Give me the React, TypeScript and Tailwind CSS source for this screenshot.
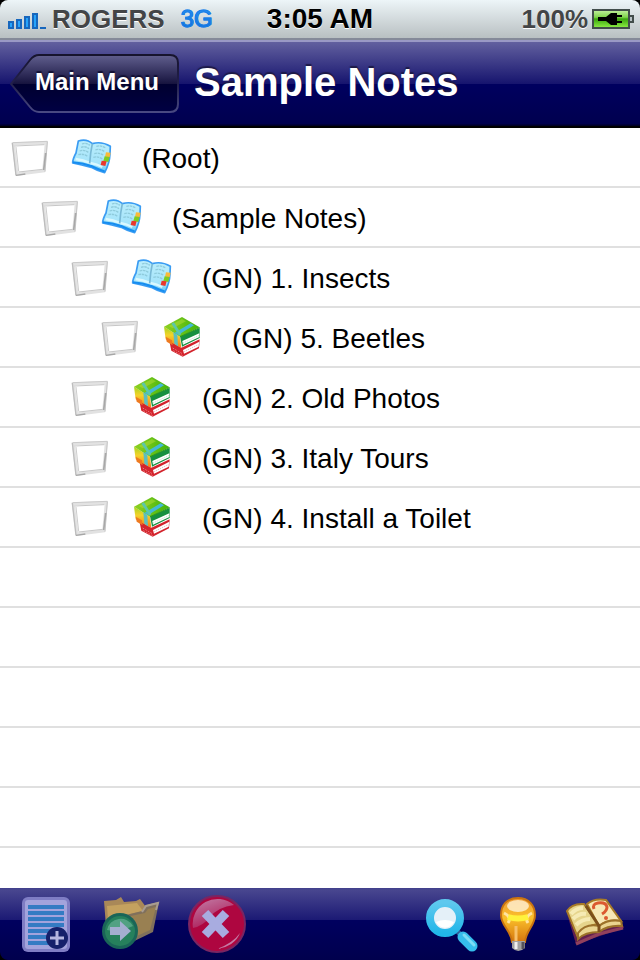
import React, { useState } from 'react';

interface NoteRow {
  id: string;
  label: string;
  level: number;
  kind: 'notebook' | 'books';
}

const notes: NoteRow[] = [
  { id: 'root', label: '(Root)', level: 0, kind: 'notebook' },
  { id: 'sample', label: '(Sample Notes)', level: 1, kind: 'notebook' },
  { id: 'insects', label: '(GN) 1. Insects', level: 2, kind: 'notebook' },
  { id: 'beetles', label: '(GN) 5. Beetles', level: 3, kind: 'books' },
  { id: 'photos', label: '(GN) 2. Old Photos', level: 2, kind: 'books' },
  { id: 'italy', label: '(GN) 3. Italy Tours', level: 2, kind: 'books' },
  { id: 'toilet', label: '(GN) 4. Install a Toilet', level: 2, kind: 'books' },
];

const indents = ['pl-[10px]', 'pl-[40px]', 'pl-[70px]', 'pl-[100px]'];

const CheckFrame = ({ checked }: { checked: boolean }) => (
  <svg viewBox="0 0 120 120" className="h-10 w-10 shrink-0" aria-hidden="true">
    <path d="M10 20 L109 17 L101 102 L21 112 Z" fill="#fff" stroke="#e2e2e2" strokeWidth="9" />
    <path d="M8 17 L112 13" stroke="#cacaca" strokeWidth="3" />
    <path d="M14 27 L103 23" stroke="#c6c6c6" strokeWidth="3" />
    <path d="M7 18 L18 115" stroke="#bdbdbd" strokeWidth="4" />
    <path d="M18 30 L26 103" stroke="#cdcdcd" strokeWidth="3" />
    <path d="M112 14 L105 104" stroke="#c4c4c4" strokeWidth="3" />
    <path d="M107 48 L101 99" stroke="#a8a8a8" strokeWidth="5" />
    <path d="M18 115 L46 111" stroke="#a6a6a6" strokeWidth="4" />
    <path d="M26 105 L98 97" stroke="#c6c6c6" strokeWidth="3" />
    {checked && <path d="M36 62 L54 84 L88 38" fill="none" stroke="#3a7d2c" strokeWidth="10" />}
  </svg>
);

const NotebookIcon = () => (
  <svg viewBox="0 0 132 120" className="h-10 w-11 shrink-0" aria-hidden="true">
    <defs>
      <linearGradient id="page" x1="0" y1="0" x2="0" y2="1">
        <stop offset="0" stopColor="#bdeefb" />
        <stop offset="0.7" stopColor="#a4e4fb" />
        <stop offset="1" stopColor="#63c3f5" />
      </linearGradient>
    </defs>
    <path
      d="M25 12 Q50 4 67 20 Q95 12 121 28 L120 50 Q119 78 104 107 Q80 101 64 91 Q34 83 8 78 Q8 66 18 48 Z"
      fill="url(#page)"
      stroke="#3a9cf3"
      strokeWidth="5"
      strokeLinejoin="round"
    />
    <path d="M9 76 Q38 78 64 87 Q82 96 104 103" fill="none" stroke="#168df0" strokeWidth="6" />
    <path d="M17 66 Q40 69 61 78 Q82 82 97 90" fill="none" stroke="#d9f8ff" strokeWidth="7" />
    <path d="M67 20 Q61 48 59 79" fill="none" stroke="#79b9d6" strokeWidth="5" />
    <path
      d="M36 21 Q48 16 60 25 M33 31 Q45 26 57 35 M29 42 Q42 37 55 46 M25 53 Q39 49 53 58 M79 28 Q93 24 108 33 M76 39 Q89 34 104 44 M73 50 Q86 45 101 55 M70 61 Q83 57 97 66"
      fill="none"
      stroke="#8fcbdc"
      strokeWidth="4"
      strokeDasharray="8 2"
    />
    <path d="M108 46 L122 47 L119 61 L105 59 Z" fill="#f9b93a" />
    <path d="M104 58 L119 60 L115 75 L100 72 Z" fill="#7dcc25" />
    <path d="M95 71 L110 73 L106 87 L92 84 Z" fill="#e9372f" />
  </svg>
);

const BooksIcon = () => (
  <svg viewBox="0 0 132 126" className="h-[42px] w-11 shrink-0" aria-hidden="true">
    <defs>
      <linearGradient id="cover" x1="0" y1="0" x2="0" y2="1">
        <stop offset="0" stopColor="#a3d420" />
        <stop offset="0.4" stopColor="#f4d32a" />
        <stop offset="1" stopColor="#f07a1c" />
      </linearGradient>
      <linearGradient id="lid" x1="0" y1="0" x2="1" y2="0">
        <stop offset="0" stopColor="#8ed022" />
        <stop offset="1" stopColor="#41b30c" />
      </linearGradient>
    </defs>
    {/* lower red book */}
    <path d="M28 74 L64 95 L119 70 L117 97 L68 122 L34 104 Z" fill="#d3232c" />
    <path d="M69 102 L118 77 L116 92 L72 113 Z" fill="#fff" />
    <path d="M71 108 L116 85" stroke="#dca0a0" strokeWidth="2" strokeDasharray="4 3" />
    <path d="M38 96 L67 113 M40 104 L68 119" stroke="#f3a4a4" strokeWidth="2" strokeDasharray="5 4" />
    {/* upper green book */}
    <path d="M12 32 L60 62 L64 96 L17 70 Z" fill="url(#cover)" />
    <path d="M17 62 L36 73 L38 88 L20 77 Z" fill="#ee7a20" />
    <path d="M60 60 L119 36 L119 66 L66 92 Z" fill="#16903f" />
    <path d="M67 75 L118 52 L118 63 L69 86 Z" fill="#fff" />
    <path d="M69 81 L118 58" stroke="#a9cfb4" strokeWidth="2" strokeDasharray="4 3" />
    <path d="M12 32 L66 3 L119 34 L60 62 Z" fill="url(#lid)" />
    <path d="M26 30 L66 9 L78 16 L38 37 Z" fill="#b4de3a" opacity="0.5" />
    <path d="M60 62 L119 35" stroke="#2d9a1c" strokeWidth="3" />
    {/* ribbon */}
    <path d="M44 50 L92 22 L102 28 L54 57 Z" fill="#43b9d6" />
    <path d="M34 23 L42 19 L64 54 L58 59 Z" fill="#5cc7a8" />
    <path d="M40 48 L52 57 L54 91 L43 83 Z" fill="#5cbfc0" />
  </svg>
);

const NewNoteIcon = () => (
  <svg viewBox="0 0 60 60" className="h-[60px] w-[60px]" aria-hidden="true">
    <rect x="6" y="3" width="48" height="55" rx="6" fill="#7f7dc4" />
    <rect x="9" y="6" width="42" height="49" rx="3" fill="#a3a3dc" />
    <path
      d="M12 13H48 M12 19H48 M12 25H48 M12 31H48 M12 37H48 M12 43H40 M12 49H36"
      stroke="#347bc3"
      strokeWidth="4"
    />
    <circle cx="41" cy="44" r="11" fill="#15206b" />
    <path d="M41 37V51 M34 44H48" stroke="#b4b5e0" strokeWidth="3" />
  </svg>
);

const MoveFolderIcon = () => (
  <svg viewBox="2 0 60 60" className="h-[60px] w-[60px]" aria-hidden="true">
    <path d="M4 7 L16 6 L21 3 L24 8 L36 7 L40 5 L46 13 L43 35 L24 50 L7 45 Z" fill="#a98858" />
    <path d="M7 12 L37 9 L43 17 L17 23 L9 40 Z" fill="#c4a15f" />
    <path d="M18 23 L42 17 L46 11 L59 8 L57 18 L53 38 L26 51 Z" fill="#80705c" />
    <path d="M21 24 L45 19 L48 15 L56 13 L50 36 L26 47 Z" fill="#998052" />
    <path d="M42 18 L46 12 L58 9 L56 16" fill="none" stroke="#a89c90" strokeWidth="2" />
    <circle cx="20" cy="37" r="18" fill="#1a6558" />
    <circle cx="20" cy="37" r="15" fill="#26805c" />
    <path d="M7 36 A14 14 0 0 1 33 32 Q20 38 7 36" fill="#52a183" />
    <path d="M10 33H20V27L31 37L20 47V41H10Z" fill="#a4aed0" />
  </svg>
);

const DeleteIcon = () => (
  <svg viewBox="0 0 60 60" className="h-[60px] w-[60px]" aria-hidden="true">
    <defs>
      <linearGradient id="gloss" x1="0" y1="0" x2="0.5" y2="1">
        <stop offset="0" stopColor="#c27fa8" />
        <stop offset="1" stopColor="#ad1a56" />
      </linearGradient>
    </defs>
    <circle cx="29" cy="30" r="28" fill="#ae0640" stroke="#7a2562" strokeWidth="2" />
    <path d="M5 34 A25 25 0 0 1 46 11 Q30 13 22 23 Q15 32 5 34Z" fill="url(#gloss)" />
    <path d="M29 55 Q47 52 52 39 Q45 49 29 55Z" fill="#c57aa4" />
    <path d="M17 19 L38 41 M38 19 L17 41" stroke="#a8ace0" strokeWidth="9" />
  </svg>
);

const SearchIcon = () => (
  <svg viewBox="0 0 56 60" className="h-[60px] w-14" aria-hidden="true">
    <defs>
      <linearGradient id="lens" x1="0" y1="0" x2="0" y2="1">
        <stop offset="0" stopColor="#5ec8ee" />
        <stop offset="1" stopColor="#21b6e9" />
      </linearGradient>
    </defs>
    <path d="M31 35 L37 41" stroke="#315b99" strokeWidth="5" />
    <circle cx="21" cy="24" r="15" fill="#e4f0f8" stroke="url(#lens)" strokeWidth="8" />
    <path d="M12 28 A10 10 0 0 0 30 28 Q21 24 12 28" fill="#fff" />
    <path d="M39 43 L48 52" stroke="#35bdec" strokeWidth="11" strokeLinecap="round" />
    <path d="M40 41 L50 51" stroke="#7cdcf5" strokeWidth="3" strokeLinecap="round" />
  </svg>
);

const BulbIcon = () => (
  <svg viewBox="0 0 48 60" className="h-[60px] w-12" aria-hidden="true">
    <defs>
      <linearGradient id="bulb" x1="0" y1="0" x2="0" y2="1">
        <stop offset="0" stopColor="#ee9a38" />
        <stop offset="0.45" stopColor="#fbc02a" />
        <stop offset="1" stopColor="#d4750f" />
      </linearGradient>
    </defs>
    <path
      d="M20 4 C8 4 3 12 3 21 C3 32 13 36 14 48 H27 C28 36 37 32 37 21 C37 12 31 4 20 4Z"
      fill="url(#bulb)"
      stroke="#ca740f"
      strokeWidth="2"
    />
    <ellipse cx="20" cy="12" rx="11" ry="6" fill="#fff2d4" opacity="0.8" />
    <path d="M6 19 Q14 23 10 29 M34 19 Q26 23 30 29" fill="none" stroke="#ffe4a1" strokeWidth="3" />
    <path d="M10 23 Q20 26 30 23" fill="none" stroke="#fff23c" strokeWidth="6" />
    <path d="M18 32V47" stroke="#f7c06a" strokeWidth="3" />
    <path d="M14 47H27V54Q20 60 14 54Z" fill="#a1a0a1" />
    <path d="M18 48V55" stroke="#efefef" strokeWidth="3" />
    <path d="M25 48V55" stroke="#54525b" strokeWidth="3" />
  </svg>
);

const HelpBookIcon = () => (
  <svg viewBox="0 0 60 60" className="h-[60px] w-[60px]" aria-hidden="true">
    <path d="M3 20 L12 50 L60 34 L58 29 L35 32 L13 44 Z" fill="#64204f" />
    <path d="M12 50 L35 40 L59 34" fill="none" stroke="#91405d" strokeWidth="3" />
    <path d="M3 17 Q8 9 20 10 L34 30 Q22 31 14 44 Z" fill="#e6d58c" stroke="#a87b27" strokeWidth="2" />
    <path d="M23 10 Q30 4 42 6 L57 27 Q44 24 35 32 Z" fill="#f7e8b5" stroke="#a87b27" strokeWidth="2" />
    <path
      d="M14 39 Q22 29 35 32 Q44 25 57 27 L58 32 Q44 31 35 38 Q21 38 14 45Z"
      fill="#ead590"
      stroke="#9c722a"
      strokeWidth="2"
    />
    <path d="M7 20 Q12 14 19 14 M9 25 Q15 19 22 20 M12 31 Q18 25 26 25" fill="none" stroke="#f6ebb4" strokeWidth="4" />
    <path d="M22 12 L35 32 V38" fill="none" stroke="#7c501b" strokeWidth="3" />
    <path d="M30 15 Q28 10 34 9 Q42 8 43 13 Q43 17 38 20" fill="none" stroke="#db5930" strokeWidth="3" />
    <circle cx="42" cy="24" r="2" fill="#db5930" />
  </svg>
);

const StatusBar = () => (
  <div className="bg-black">
    <div className="grid h-10 grid-cols-[1fr_auto_1fr] items-center rounded-t-lg border-b-2 border-[#858a99] bg-linear-to-b from-[#edf5f8] to-[#b9c0c2] px-2 font-bold">
      <div className="flex items-center">
        <svg viewBox="0 0 38 18" className="mt-0.5 h-[18px] w-[38px]" aria-hidden="true">
          <path
            d="M1 11h4v6h-4z M9 9h4v8h-4z M17 6h4v11h-4z M25 3h4v14h-4z"
            fill="#26a4fb"
            stroke="#1767bd"
            strokeWidth="2"
          />
          <path d="M32 17h6" stroke="#1767bd" strokeWidth="2" />
        </svg>
        <span className="ml-1.5 text-[26px] leading-9 text-[#434547] [text-shadow:0_1px_0_#fff]">ROGERS</span>
        <span className="ml-4 bg-linear-to-b from-[#32a2ff] to-[#075ac7] bg-clip-text text-2xl font-normal leading-9 text-transparent [-webkit-text-stroke:1px_#187ee8]">
          3G
        </span>
      </div>
      <span className="text-[28px] leading-9 text-black [text-shadow:0_1px_0_#fff]">3:05 AM</span>
      <div className="flex items-center justify-end">
        <span className="text-[26px] leading-9 text-[#434547] [text-shadow:0_1px_0_#fff]">100%</span>
        <svg viewBox="0 0 42 20" className="-mr-0.5 ml-1 h-5 w-[42px]" aria-hidden="true">
          <defs>
            <linearGradient id="charge" x1="0" y1="0" x2="0" y2="1">
              <stop offset="0" stopColor="#c4f1a1" />
              <stop offset="0.4" stopColor="#80d44c" />
              <stop offset="0.5" stopColor="#39a50d" />
              <stop offset="1" stopColor="#91f147" />
            </linearGradient>
          </defs>
          <rect x="1" y="1" width="36" height="18" fill="url(#charge)" stroke="#424d4b" strokeWidth="2" />
          <path d="M38 7h3v6h-3" fill="#b7c1c4" stroke="#424d4b" strokeWidth="2" />
          <path d="M6 8h8l5-4h6v2h5v2h-5v4h5v2h-5v2h-6l-5-4h-8z" fill="#000" />
        </svg>
      </div>
    </div>
  </div>
);

const App: React.FC = () => {
  const [checked, setChecked] = useState<string[]>([]);

  const toggle = (id: string): void => {
    setChecked((prev) => (prev.includes(id) ? prev.filter((item) => item !== id) : [...prev, id]));
  };

  return (
    <div className="flex h-screen flex-col bg-white font-['Liberation_Sans',Arial,sans-serif]">
      <StatusBar />

      <header className="flex h-[88px] shrink-0 items-center border-b-2 border-t-2 border-b-black border-t-[#9a99c5] bg-[linear-gradient(#62609f_0%,#16146e_50%,#00005f_50%,#00004f_97%,#000020_100%)] pl-[10px]">
        <button type="button" className="relative h-[60px] w-[170px] shrink-0 pb-1 pl-1 text-2xl font-bold text-white">
          <svg viewBox="0 0 170 60" className="absolute inset-0 h-full w-full" aria-hidden="true">
            <defs>
              <linearGradient id="back" x1="0" y1="0" x2="0" y2="1">
                <stop offset="0" stopColor="#615f8e" />
                <stop offset="0.5" stopColor="#17143f" />
                <stop offset="0.51" stopColor="#00002f" />
                <stop offset="1" stopColor="#000043" />
              </linearGradient>
              <linearGradient id="rim" x1="0" y1="0" x2="0" y2="1">
                <stop offset="0" stopColor="#17142e" />
                <stop offset="0.5" stopColor="#22204b" />
                <stop offset="1" stopColor="#494982" />
              </linearGradient>
            </defs>
            <path
              d="M29 1H160Q168 1 168 9V50Q168 58 160 58H29Q24 58 20 53L1 30L20 6Q24 1 29 1Z"
              fill="url(#back)"
              stroke="url(#rim)"
              strokeWidth="2"
            />
          </svg>
          <span className="relative [text-shadow:0_-2px_1px_#111033]">Main Menu</span>
        </button>
        <h1 className="ml-3.5 pb-1 text-[40px] font-bold leading-[48px] text-white [text-shadow:0_-2px_1px_#1d1a47]">
          Sample Notes
        </h1>
      </header>

      <main className="flex-1 overflow-hidden bg-white">
        <ul>
          {notes.map((note) => (
            <li key={note.id} className="h-[60px] border-b-2 border-[#e0e0e0]">
              <label className={`flex h-full items-center ${indents[note.level]}`}>
                <input
                  type="checkbox"
                  className="sr-only"
                  checked={checked.includes(note.id)}
                  onChange={() => toggle(note.id)}
                />
                <CheckFrame checked={checked.includes(note.id)} />
                <span className="ml-5 mr-7 flex">
                  {note.kind === 'notebook' ? <NotebookIcon /> : <BooksIcon />}
                </span>
                <span className="pt-1 text-[28px] leading-8 text-black">{note.label}</span>
              </label>
            </li>
          ))}
        </ul>
        {/* blank ruled lines below the notes */}
        <div className="h-full bg-[repeating-linear-gradient(#fff_0px,#fff_58px,#e0e0e0_58px,#e0e0e0_60px)]" />
      </main>

      <footer className="bg-black">
        <div className="flex h-[72px] items-center justify-between rounded-b-lg bg-[linear-gradient(#413f8c_0px,#48468f_2px,#1b1974_32px,#00005f_32px,#00004d_100%)] px-4">
          <div className="flex gap-[26px]">
            <button type="button" aria-label="New note">
              <NewNoteIcon />
            </button>
            <button type="button" aria-label="Move to folder">
              <MoveFolderIcon />
            </button>
            <button type="button" aria-label="Delete">
              <DeleteIcon />
            </button>
          </div>
          <div className="flex gap-[18px]">
            <button type="button" aria-label="Search">
              <SearchIcon />
            </button>
            <button type="button" aria-label="Tips">
              <BulbIcon />
            </button>
            <button type="button" aria-label="Help">
              <HelpBookIcon />
            </button>
          </div>
        </div>
      </footer>
    </div>
  );
};

export default App;
